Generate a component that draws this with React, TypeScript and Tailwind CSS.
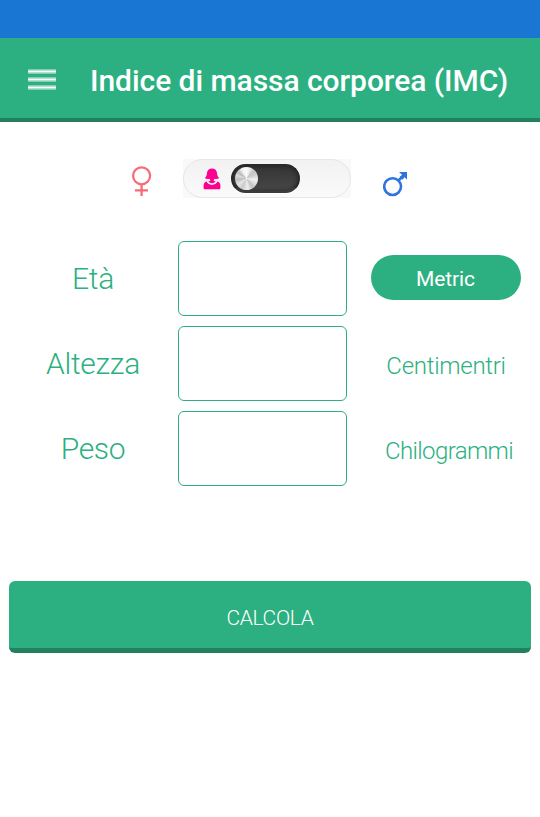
import { useState } from "react";

export default function App() {
  const [metric, setMetric] = useState(true);

  return (
    <div className="flex flex-col w-full h-[817px] overflow-hidden bg-white font-['Roboto',sans-serif] font-light text-[#2cb081]">
      <div className="h-[38px] shrink-0 bg-[#1976d3]" />
      <Header title="Indice di massa corporea (IMC)" />
      <GenderPicker />
      <div className="flex flex-col gap-2.5 mt-[43px] px-[9px]">
        <Row label="Età">
          <button
            className="w-[150px] h-[45px] -mt-0.5 pt-1 pr-px rounded-full bg-[#2cb081] text-white text-[21px] font-normal leading-none tracking-[-0.1px]"
            onClick={() => setMetric(!metric)}
          >
            Metric
          </button>
        </Row>
        <Row label="Altezza">
          <span className="mt-1 text-[24px] leading-7 tracking-[-0.28px]">Centimentri</span>
        </Row>
        <Row label="Peso">
          <span className="mt-1 ml-1.5 text-[24px] leading-7 tracking-[-0.6px]">Chilogrammi</span>
        </Row>
      </div>
      <button className="mx-[9px] mt-[95px] h-[72px] pt-2 rounded-[6px] border-b-[5px] border-[#22805e] bg-[#2cb081] text-white text-[21px] leading-none tracking-[-0.35px]">
        CALCOLA
      </button>
    </div>
  );
}

function Header({ title }: { title: string }) {
  return (
    <div className="flex items-center h-[84px] shrink-0 pl-7 pt-1 gap-[34px] bg-[#2cb081] border-b-4 border-[#22805e]">
      <svg className="w-7 h-[21px] -mt-px shrink-0" viewBox="0 0 28 21" shapeRendering="crispEdges">
        {[0, 8, 16].map((y) => (
          <g key={y} fill="#fff">
            <rect y={y} width="28" height="5" opacity="0.4" />
            <rect y={y + 1} width="28" height="3" opacity="0.4" />
            <rect y={y + 2} width="28" height="1" />
          </g>
        ))}
      </svg>
      <h1 className="mt-0.5 text-[30px] leading-9 font-medium tracking-[-0.05px] text-white whitespace-nowrap">
        {title}
      </h1>
    </div>
  );
}

function GenderPicker() {
  return (
    <div className="flex items-start mt-[37px] pl-[131px]">
      <svg className="w-[21px] h-[31px] mt-[7px]" viewBox="0 0 21 31" fill="none" stroke="#f86b76" strokeWidth="2.3">
        <circle cx="10.6" cy="9.8" r="8.5" />
        <path d="M10.6 18.3V30M4 24.3h13" />
      </svg>
      <GenderSwitch />
      <svg className="w-[25px] h-[26px] mt-3 ml-8" viewBox="0 0 25 26" fill="none" stroke="#2f74dc" strokeWidth="2.6">
        <circle cx="9.6" cy="15.6" r="8.4" />
        <path d="M15.5 9.5 20.5 4.5" />
        <path d="M16 1h8v7.5l-2.6-2.2-1.7 2.5-3-3 2.5-1.9z" fill="#2f74dc" stroke="none" />
      </svg>
    </div>
  );
}

function GenderSwitch() {
  const [male, setMale] = useState(false);

  return (
    <button
      className="flex w-[168px] h-[39px] ml-[31px] bg-[#f9f9f9]"
      onClick={() => setMale(!male)}
    >
      <span className="flex items-center w-full h-full rounded-full border border-[#e6e6e6] bg-linear-to-b from-[#f2f2f2] to-[#fafafa] pl-[19px]">
        <svg className="w-[18px] h-[22px]" viewBox="0 0 18 22" fill="#ff0091">
          <path d="M9 .5C6 .5 4.2 2.3 4 5 3.8 7.5 3.2 9 1.6 10 3.3 11 5.2 11.1 6.4 10.7L7.2 12v.9L5.2 13.2Q6.5 15.3 9 15.3t3.8-2.1l-2-.3V12l.8-1.3c1.2.4 3.1.3 4.8-.7-1.6-1-2.2-2.5-2.4-5C13.8 2.3 12 .5 9 .5Z" />
          <path d="M3.6 13.6C1.6 14.2.6 15.5.6 17.2V20Q.6 21.2 1.8 21.2H16.2Q17.4 21.2 17.4 20V17.2C17.4 15.5 16.4 14.2 14.4 13.6 13.4 15.7 11.2 16.9 9 16.9S4.6 15.7 3.6 13.6Z" />
        </svg>
        <span className="flex items-center ml-2.5 w-[69px] h-[29px] px-1 rounded-full border-2 border-[#292929] border-b-[#3b3b3b] bg-linear-to-b from-[#343434] to-[#484848] shadow-[inset_0_0_4px_#222,0_1px_0_#fff]">
          <span
            className={`size-[23px] -ml-0.5 rounded-full bg-[conic-gradient(#fafafa,#eee_5%,#c4c4c4_12%,#cfcfcf_19%,#f2f2f2_27%,#d8d8d8_35%,#c2c2c2_40%,#ececec_48%,#cacaca_57%,#e6e6e6_65%,#bdbdbd_73%,#dcdcdc_80%,#b9b9b9_85%,#f5f5f5_93%,#fafafa)] ${
              male ? "translate-x-9" : ""
            }`}
          />
        </span>
      </span>
    </button>
  );
}

function Row({ label, children }: { label: string; children: React.ReactNode }) {
  return (
    <div className="flex items-center h-[75px]">
      <label className="w-[169px] pr-px text-center text-[30px] leading-9 tracking-[-0.28px]">{label}</label>
      <input className="w-[169px] h-[75px] px-3 rounded-[6px] border border-[#2cb081] text-[30px] outline-none" />
      <div className="flex justify-center w-[150px] ml-6 whitespace-nowrap">{children}</div>
    </div>
  );
}
